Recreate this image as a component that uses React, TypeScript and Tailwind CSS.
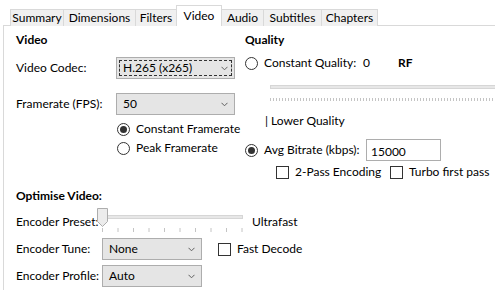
import React from 'react';

const tabs = [
  { label: 'Summary', w: 'w-[54px]' },
  { label: 'Dimensions', w: 'w-[73px]' },
  { label: 'Filters', w: 'w-[42px]' },
  { label: 'Video', w: 'w-[46px]', active: true },
  { label: 'Audio', w: 'w-[43px]' },
  { label: 'Subtitles', w: 'w-[59px]' },
  { label: 'Chapters', w: 'w-[57px]' },
];

function Chevron() {
  return (
    <svg width="7" height="5" viewBox="0 0 7 5" className="shrink-0">
      <path d="M0.5 0.8 L3.5 3.8 L6.5 0.8" fill="none" stroke="#606060" strokeWidth="1" />
    </svg>
  );
}

function Select({ value, className, focused }: { value: string; className: string; focused?: boolean }) {
  return (
    <div className={`relative h-[22px] flex items-center justify-between border border-[#adadad] bg-[#e5e5e5] pl-[6px] pr-[6px] ${className}`}>
      {focused && <div className="absolute inset-[2px] border border-dashed border-[#333]" />}
      <span>{value}</span>
      <Chevron />
    </div>
  );
}

function Radio({ checked }: { checked?: boolean }) {
  return (
    <span className="w-[13px] h-[13px] shrink-0 rounded-full border border-[#333] bg-white flex items-center justify-center">
      {checked && <span className="w-[7px] h-[7px] rounded-full bg-[#333]" />}
    </span>
  );
}

function Checkbox({ className = '' }: { className?: string }) {
  return <span className={`block w-[13px] h-[13px] shrink-0 border border-[#333] bg-white ${className}`} />;
}

export default function App() {
  return (
    <div className="w-[495px] h-[290px] overflow-hidden bg-white text-black text-[12px] leading-[16px] whitespace-nowrap font-['Lato',sans-serif]">
      {/* Tabs */}
      <div className="relative z-10 flex items-end h-[26px] pl-[10px]">
        {tabs.map((t) =>
          t.active ? (
            <div
              key={t.label}
              className={`${t.w} h-[21px] -ml-px flex items-start justify-center pt-[2px] bg-white border border-b-0 border-[#d9d9d9]`}
            >
              {t.label}
            </div>
          ) : (
            <div
              key={t.label}
              className={`${t.w} h-[17px] -ml-px first:ml-0 flex items-center justify-center bg-[#f0f0f0] border border-b-0 border-[#d9d9d9]`}
            >
              {t.label}
            </div>
          )
        )}
      </div>

      {/* Panel */}
      <div className="-mt-px ml-[3px] border-l border-t border-[#d9d9d9] pl-[12px] pt-[6px] h-[300px]">
        <div className="flex">
          {/* Video column */}
          <div className="w-[229px] shrink-0">
            <div className="font-bold">Video</div>
            <div className="mt-[9px] flex items-center">
              <span className="w-[100px]">Video Codec:</span>
              <Select value="H.265 (x265)" className="w-[119px]" focused />
            </div>
            <div className="mt-[14px] flex items-center">
              <span className="w-[100px]">Framerate (FPS):</span>
              <Select value="50" className="w-[119px]" />
            </div>
            <div className="mt-[6px] pl-[101px] flex items-center gap-[6px] h-[16px]">
              <Radio checked />
              <span>Constant Framerate</span>
            </div>
            <div className="mt-[3px] pl-[101px] flex items-center gap-[6px] h-[16px]">
              <Radio />
              <span>Peak Framerate</span>
            </div>
          </div>

          {/* Quality column */}
          <div className="flex-1 min-w-0">
            <div className="font-bold">Quality</div>
            <div className="mt-[7px] flex items-center h-[16px]">
              <Radio />
              <span className="ml-[6px] w-[99px]">Constant Quality:</span>
              <span className="w-[35px]">0</span>
              <span className="font-bold">RF</span>
            </div>
            <div className="ml-[25px] mt-[14px] w-[260px]">
              <div className="h-[4px] bg-[#e7e7e7] border border-[#d6d6d6]" />
              <svg width="260" height="3" className="mt-[9px] block">
                {Array.from({ length: 87 }).map((_, i) => (
                  <line key={i} x1={i * 3 + 0.5} y1="0" x2={i * 3 + 0.5} y2="3" stroke="#c4c4c4" />
                ))}
              </svg>
            </div>
            <div className="ml-[20px] mt-[12px]">| Lower Quality</div>
            <div className="mt-[10px] flex items-center h-[22px]">
              <Radio checked />
              <span className="ml-[6px] w-[102px]">Avg Bitrate (kbps):</span>
              <div className="w-[75px] h-[22px] border border-[#adadad] pl-[4px] pt-[4px]">15000</div>
            </div>
            <div className="mt-[3px] ml-[31px] flex items-center h-[16px]">
              <Checkbox />
              <span className="ml-[6px] w-[95px]">2-Pass Encoding</span>
              <Checkbox />
              <span className="ml-[6px]">Turbo first pass</span>
            </div>
          </div>
        </div>

        {/* Optimise video */}
        <div className="mt-[8px] font-bold">Optimise Video:</div>
        <div className="mt-[4px] flex items-start h-[25px]">
          <span className="w-[81px] mt-[6px]">Encoder Preset:</span>
          <div className="relative w-[146px] h-[25px]">
            <div className="absolute left-[7px] right-0 top-[7px] h-[4px] bg-[#e7e7e7] border border-[#d6d6d6]" />
            <svg width="12" height="20" className="absolute left-0 top-0">
              <path d="M0.5 0.5 H10.5 V13.5 L5.5 18.5 L0.5 13.5 Z" fill="#ececec" stroke="#adadad" />
            </svg>
            <svg width="146" height="5" className="absolute left-0 top-[20px]">
              {Array.from({ length: 10 }).map((_, i) => (
                <line key={i} x1={5.5 + i * 15.5} y1="0" x2={5.5 + i * 15.5} y2="4" stroke="#c4c4c4" />
              ))}
            </svg>
          </div>
          <span className="ml-[9px] mt-[6px]">Ultrafast</span>
        </div>
        <div className="mt-[5px] flex items-center">
          <span className="w-[86px]">Encoder Tune:</span>
          <Select value="None" className="w-[100px]" />
          <Checkbox className="ml-[16px]" />
          <span className="ml-[6px]">Fast Decode</span>
        </div>
        <div className="mt-[5px] flex items-center">
          <span className="w-[86px]">Encoder Profile:</span>
          <Select value="Auto" className="w-[100px]" />
        </div>
      </div>
    </div>
  );
}
